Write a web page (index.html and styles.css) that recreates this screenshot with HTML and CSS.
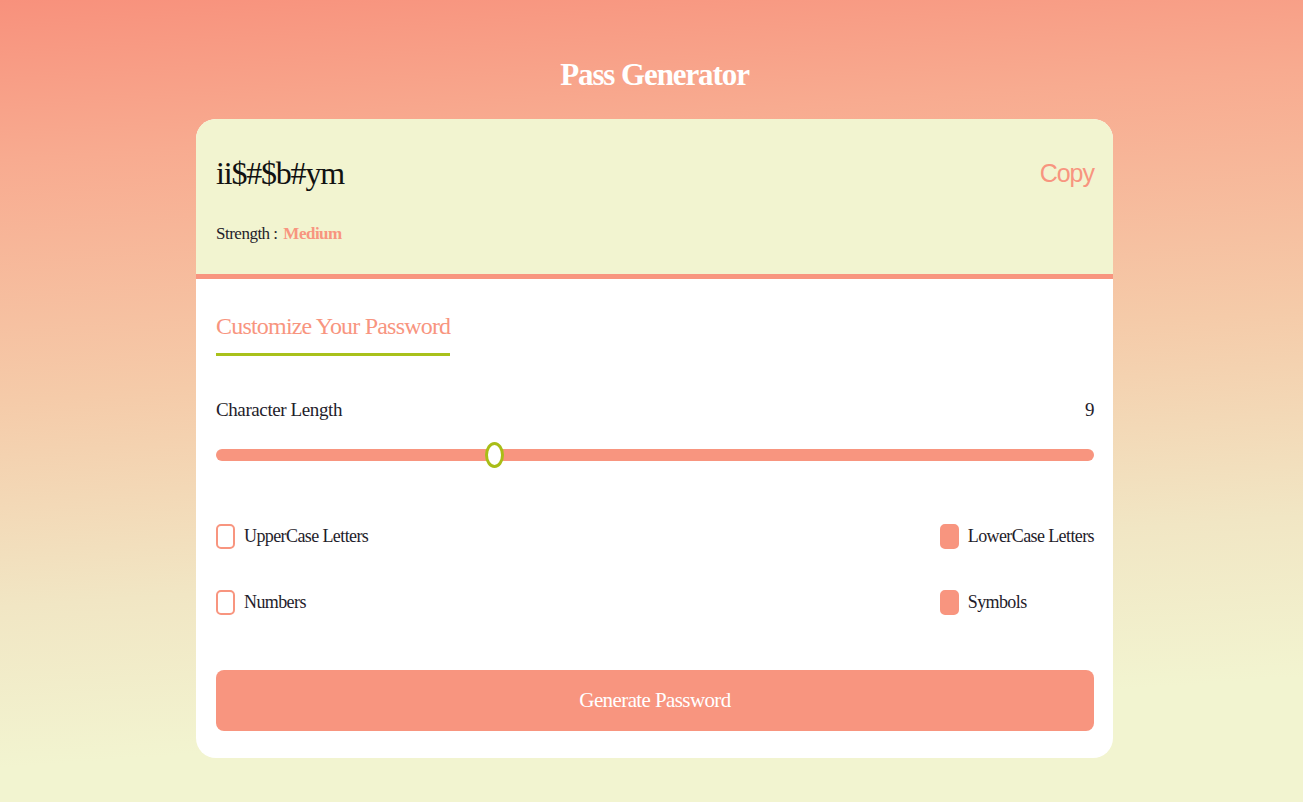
FILE: index.html
```html
<!DOCTYPE html>
<html lang="en">
<head>
<meta charset="utf-8">
<title>Pass Generator</title>
<link rel="stylesheet" href="styles.css">
</head>
<body>
<h1 class="title">Pass Generator</h1>
<main class="card">
  <section class="display">
    <div class="display-row">
      <span class="password">ii$#$b#ym</span>
      <button class="copy">Copy</button>
    </div>
    <div class="strength">Strength : <span class="strength-value">Medium</span></div>
  </section>
  <section class="settings">
    <h2 class="heading">Customize Your Password</h2>
    <div class="length-row">
      <span class="length-label">Character Length</span>
      <span class="length-value">9</span>
    </div>
    <div class="slider">
      <div class="track"></div>
      <div class="thumb" style="left: 269px"></div>
    </div>
    <div class="options">
      <div class="option-col">
        <label class="option"><span class="box"></span>UpperCase Letters</label>
        <label class="option"><span class="box"></span>Numbers</label>
      </div>
      <div class="option-col">
        <label class="option"><span class="box checked"></span>LowerCase Letters</label>
        <label class="option"><span class="box checked"></span>Symbols</label>
      </div>
    </div>
    <button class="generate">Generate Password</button>
  </section>
</main>
</body>
</html>
```
FILE: styles.css
```css
* { box-sizing: border-box; }

html, body { height: 100%; }

body {
  margin: 0;
  padding-left: 6px;
  min-height: 802px;
  background: linear-gradient(176deg, #f8917c 0%, #f8ab90 18%, #f5cba9 45%, #f1e6c4 68%, #f2f4d0 86%, #f2f4d0 100%);
  font-family: "Liberation Serif", "Times New Roman", serif;
  color: #1f1d2b;
}

.title {
  margin: 0;
  padding-top: 56px;
  height: 94px;
  line-height: 38px;
  text-align: center;
  color: #ffffff;
  font-size: 31px;
  font-weight: bold;
  letter-spacing: -1.1px;
}

.card {
  width: 917px;
  margin: 25px auto 0;
  background: #ffffff;
  border-radius: 20px;
  overflow: hidden;
}

.display {
  background: #f2f4d0;
  height: 160px;
  padding: 32px 19px 0 20px;
  border-bottom: 5px solid #f8957f;
}

.display-row {
  display: flex;
  justify-content: space-between;
  align-items: center;
  height: 44px;
}

.password {
  font-size: 32px;
  letter-spacing: -1.2px;
  color: #111111;
}

.copy {
  border: none;
  background: none;
  padding: 0;
  font-family: "Liberation Sans", Arial, sans-serif;
  font-size: 25px;
  color: #f8957f;
  letter-spacing: -1px;
}

.strength {
  margin-top: 27px;
  line-height: 24px;
  font-size: 17px;
  letter-spacing: -0.5px;
}

.strength-value {
  color: #f8957f;
  font-weight: bold;
  margin-left: 2px;
}

.settings {
  padding: 30px 19px 27px 20px;
  display: flex;
  flex-direction: column;
}

.heading {
  align-self: flex-start;
  margin: 0;
  line-height: 34px;
  font-size: 24px;
  font-weight: normal;
  letter-spacing: -0.8px;
  color: #f8957f;
  padding-bottom: 10px;
  border-bottom: 3px solid #a9c11b;
}

.length-row {
  margin-top: 40px;
  height: 28px;
  display: flex;
  justify-content: space-between;
  align-items: center;
  font-size: 19px;
  letter-spacing: -0.4px;
}

.slider {
  position: relative;
  margin-top: 18px;
  height: 26px;
  display: flex;
  align-items: center;
}

.track {
  width: 100%;
  height: 12px;
  border-radius: 6px;
  background: #f8957f;
}

.thumb {
  position: absolute;
  top: 0;
  width: 19px;
  height: 26px;
  border-radius: 50%;
  background: #ffffff;
  border: 3px solid #a9bd17;
}

.options {
  margin-top: 54px;
  display: flex;
  justify-content: space-between;
}

.option-col {
  display: flex;
  flex-direction: column;
  gap: 38px;
}

.option {
  display: flex;
  align-items: center;
  gap: 9px;
  height: 28px;
  font-size: 18px;
  letter-spacing: -0.6px;
}

.box {
  width: 19px;
  height: 25px;
  border: 2px solid #f8957f;
  border-radius: 5px;
  background: #ffffff;
}

.box.checked {
  background: #f8957f;
}

.generate {
  margin-top: 54px;
  height: 61px;
  width: 100%;
  border: none;
  border-radius: 8px;
  background: #f8957f;
  color: #ffffff;
  font-family: "Liberation Serif", "Times New Roman", serif;
  font-size: 21px;
  letter-spacing: -0.6px;
}
```
